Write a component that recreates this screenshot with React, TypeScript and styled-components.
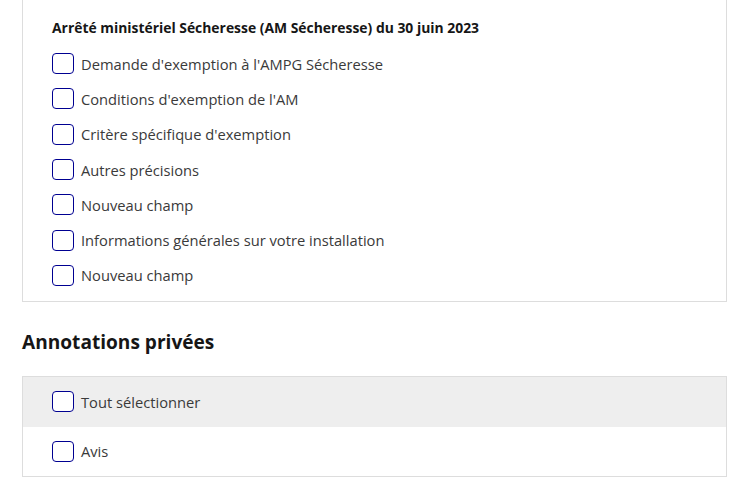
import React from "react";
import styled, { createGlobalStyle } from "styled-components";

const Global = createGlobalStyle`
  html, body { margin: 0; padding: 0; background: #fff; }
  body { font-family: "Open Sans", "Noto Sans", sans-serif; color: #3a3a3a; }
  * { box-sizing: border-box; }
`;

const Page = styled.div`
  padding: 0 18px 0 22px;
  width: 745px;
`;

const Card = styled.section<{ $open?: boolean }>`
  border: 1px solid #dddddd;
  border-top: ${(p) => (p.$open ? "none" : "1px solid #dddddd")};
  background: #fff;
`;

const FieldCard = styled(Card)`
  padding: 16px 29px 8px;
`;

const CardTitle = styled.h3`
  margin: 0 0 6px;
  font-size: 13.9px;
  line-height: 24px;
  font-weight: 700;
  color: #161616;
`;

const Row = styled.label<{ $shade?: boolean; $tall?: boolean }>`
  display: flex;
  align-items: center;
  gap: 7px;
  height: ${(p) => (p.$tall ? "49.5px" : "35.3px")};
  padding-left: ${(p) => (p.$tall ? "29px" : "0")};
  background: ${(p) => (p.$shade ? "#eeeeee" : "transparent")};
  font-size: 14.7px;
  color: #3a3a3a;
  cursor: pointer;
`;

const Box = styled.span`
  flex: none;
  width: 22px;
  height: 21px;
  border: 1px solid #000091;
  border-radius: 4px;
  background: #fff;
`;

const Heading = styled.h2`
  margin: 26px 0 20px;
  font-size: 19.1px;
  line-height: 28px;
  font-weight: 700;
  color: #161616;
`;

const fields = [
  "Demande d'exemption à l'AMPG Sécheresse",
  "Conditions d'exemption de l'AM",
  "Critère spécifique d'exemption",
  "Autres précisions",
  "Nouveau champ",
  "Informations générales sur votre installation",
  "Nouveau champ",
];

export default function App() {
  return (
    <>
      <Global />
      <Page>
        <FieldCard $open>
          <CardTitle>Arrêté ministériel Sécheresse (AM Sécheresse) du 30 juin 2023</CardTitle>
          {fields.map((f, i) => (
            <Row key={i}>
              <Box />
              {f}
            </Row>
          ))}
        </FieldCard>
        <Heading>Annotations privées</Heading>
        <Card>
          <Row $tall $shade>
            <Box />
            Tout sélectionner
          </Row>
          <Row $tall>
            <Box />
            Avis
          </Row>
        </Card>
      </Page>
    </>
  );
}
